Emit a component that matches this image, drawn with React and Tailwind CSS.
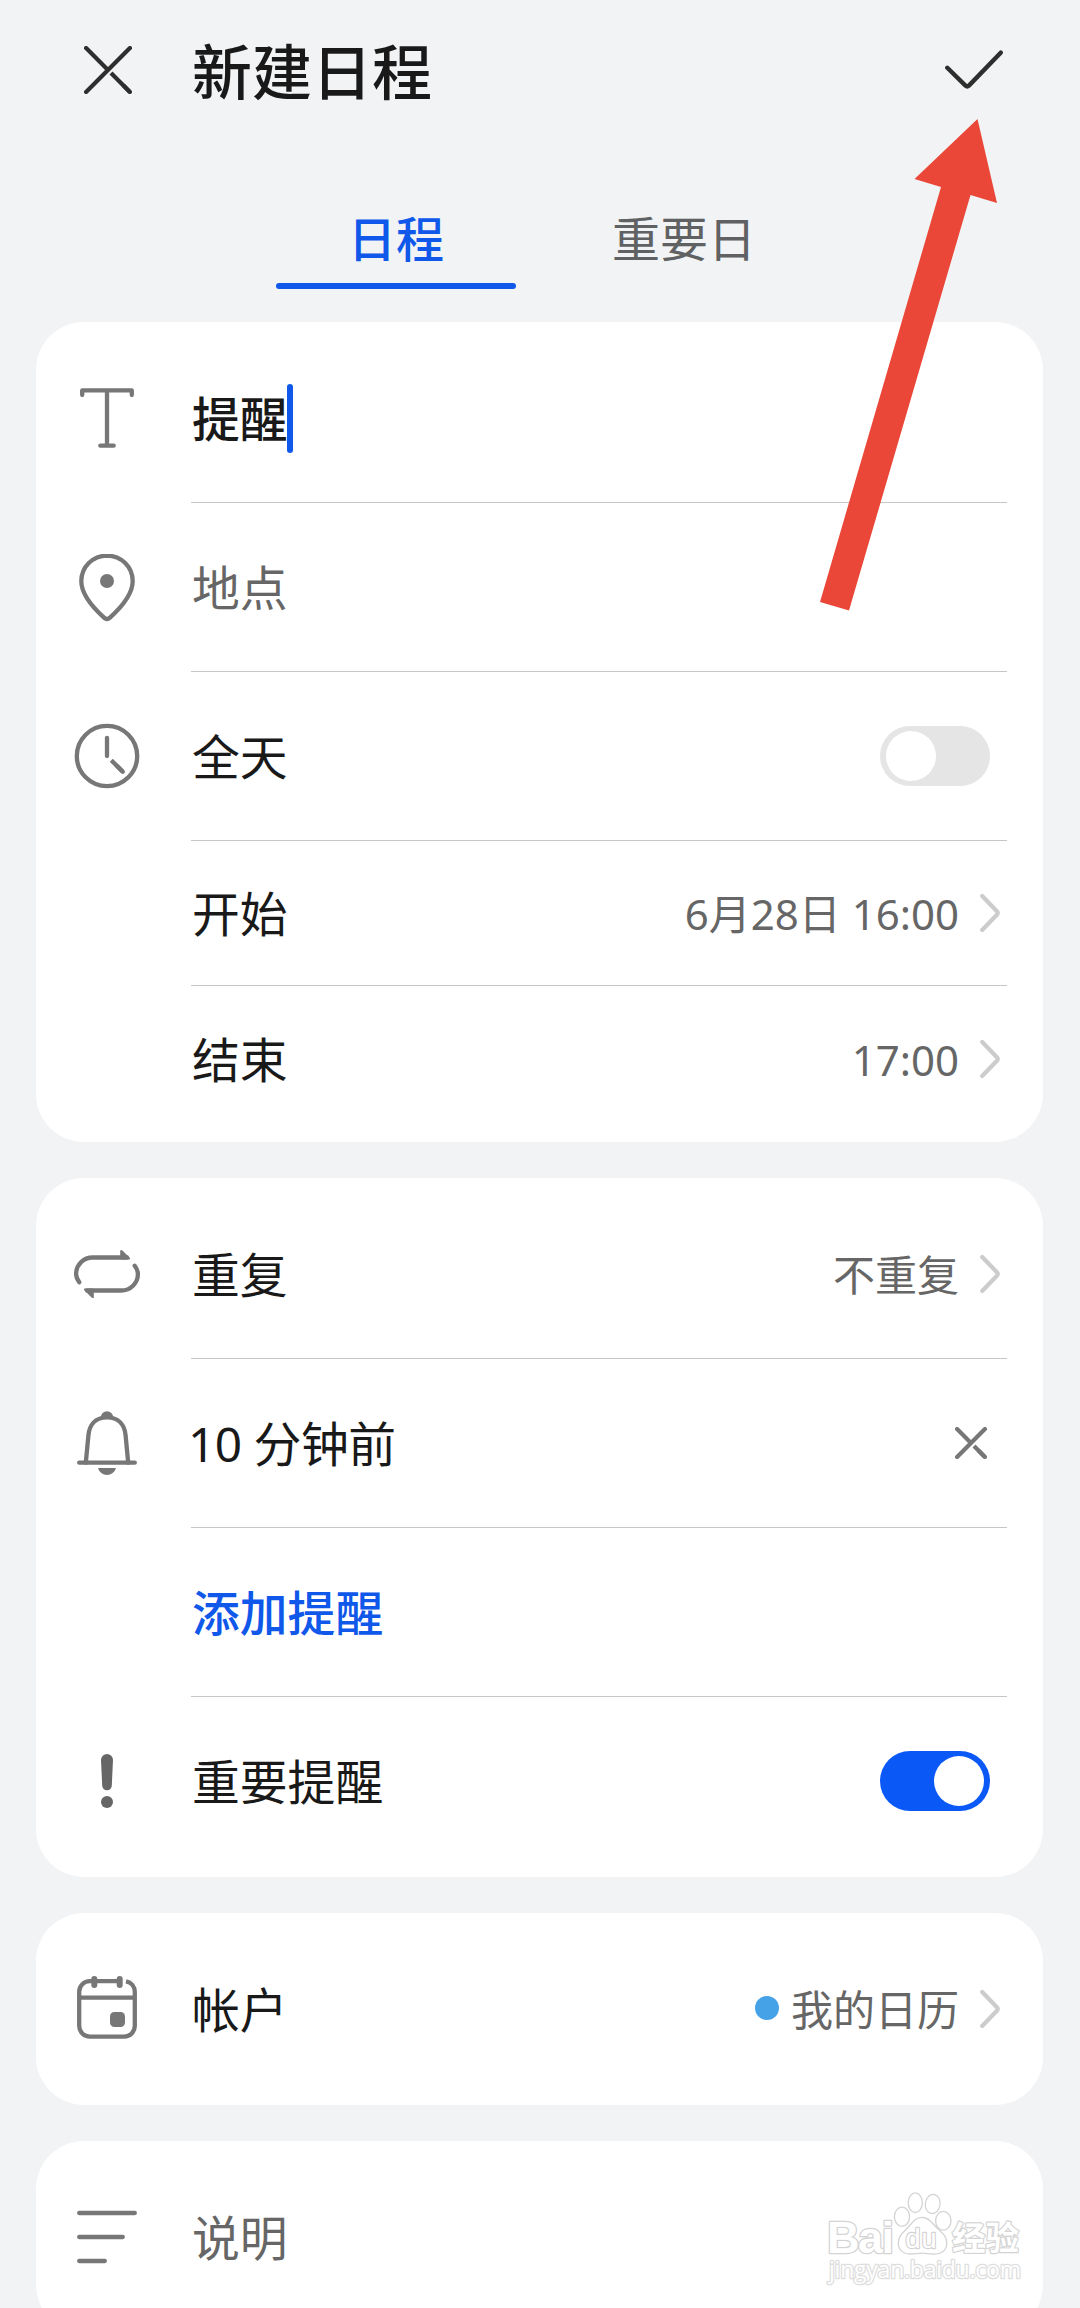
import React from "react";

const iconProps = {
  width: 72,
  height: 72,
  viewBox: "0 0 72 72",
  fill: "none",
  stroke: "#777777",
  strokeWidth: 4.3,
  strokeLinecap: "round",
  strokeLinejoin: "round",
};

const TitleIcon = () => (
  <svg {...iconProps}>
    <path d="M11.2 13V8.4H60.8V13M36 8.4V63.7M29.3 63.7H42.7" />
  </svg>
);

const PinIcon = () => (
  <svg {...iconProps}>
    <path d="M36 4.6C21.7 4.6 10.3 16 10.3 30.2C10.3 43 22.5 57 33 66.6Q36 69.4 39 66.6C49.5 57 61.7 43 61.7 30.2C61.7 16 50.3 4.6 36 4.6Z" />
    <circle cx="36" cy="30" r="7" fill="#777777" stroke="none" />
  </svg>
);

const ClockIcon = () => (
  <svg {...iconProps}>
    <circle cx="36" cy="36" r="30.2" />
    <path d="M36 17.8V36" />
    <path d="M51.8 51.8L40.3 40.3" strokeLinecap="butt" />
    <path d="M51.8 51.8L46 46" />
  </svg>
);

const RepeatArm = () => (
  <>
    <path d="M8.3 44.2C6.3 41.5 5.1 39.2 5.1 36C5.1 26.8 12.5 19.5 21.8 19.5H56" />
    <path d="M49.2 19V12.6Q50 11.4 51.4 12.6L59.2 20.2Q59.4 21.6 58 21.6H50Z" fill="#777777" stroke="none" />
  </>
);

const RepeatIcon = () => (
  <svg {...iconProps}>
    <RepeatArm />
    <g transform="rotate(180 36 36)">
      <RepeatArm />
    </g>
  </svg>
);

const BellIcon = () => (
  <svg {...iconProps}>
    <path d="M8.2 55.7H63.8" />
    <path d="M14.8 55.7L17.4 28.5C18.4 17.5 25 10.4 36 10.4C47 10.4 53.6 17.5 54.6 28.5L57.2 55.7" />
    <path d="M29.8 10.5A6.2 6.2 0 0 1 42.2 10.5Z" fill="#777777" stroke="none" />
    <path d="M27 61H45A9.3 9.3 0 0 1 27 61Z" fill="#777777" stroke="none" />
  </svg>
);

const AlertIcon = () => (
  <svg {...iconProps} stroke="none" fill="#666666">
    <path d="M30 15A6 6 0 0 1 42 15L40.8 40.500A4.800 4.800 0 0 1 31.200 40.500Z" />
    <circle cx="36" cy="57" r="6" />
  </svg>
);

const CalendarIcon = () => (
  <svg {...iconProps}>
    <path d="M55 8.4C60.5 9.5 63.8 13.6 63.8 19V53A10.6 10.6 0 0 1 53.2 63.6H18.8A10.6 10.6 0 0 1 8.2 53V18.6A10.6 10.6 0 0 1 18.8 8.1H50" strokeLinecap="butt" />
    <path d="M8.2 24.7H63.8" strokeLinecap="butt" />
    <path d="M23.3 6V12M48.7 6V12" strokeWidth="6" />
    <rect x="39" y="39" width="15" height="15" rx="4.5" fill="#777777" stroke="none" />
  </svg>
);

const NotesIcon = () => (
  <svg {...iconProps}>
    <path d="M8.2 12H63.8M8.2 36H51.8M8.2 60H33.8" />
  </svg>
);

const Chevron = () => (
  <svg className="ml-[21px] mr-[7px] shrink-0" width="20" height="40" viewBox="0 0 20 40" fill="none" stroke="#cccccc" strokeWidth="4.2" strokeLinecap="round" strokeLinejoin="round">
    <path d="M2.2 3L16.9 18.2Q18.6 20 16.9 21.8L2.2 37" />
  </svg>
);

const Cross = ({ size, color, className }) => (
  <svg className={className} width={size} height={size} viewBox={`0 0 ${size} ${size}`} fill="none" stroke={color} strokeWidth="4.2" strokeLinecap="round">
    <path d={`M${size - 2.1} 2.1L2.1 ${size - 2.1}M2.1 2.1L${size / 2} ${size / 2}`} />
    <path d={`M${size - 2.1} ${size - 2.1}L${size - 8} ${size - 8}`} />
    <path d={`M${size - 2.1} ${size - 2.1}L${size / 2 + 3} ${size / 2 + 3}`} strokeLinecap="butt" />
  </svg>
);

const Toggle = ({ on }) => (
  <div
    className={
      on
        ? "mr-[17px] flex h-[60px] w-[110px] items-center justify-end rounded-full bg-[#0a59f7] px-1.5"
        : "mr-[17px] flex h-[60px] w-[110px] items-center rounded-full bg-[#e5e5e5] px-1.5"
    }
  >
    <div className="size-[50px] rounded-full bg-white" />
  </div>
);

const Card = ({ children }) => (
  <section className="rounded-[48px] bg-white py-3 pl-[35px] pr-9">{children}</section>
);

const Value = ({ children }) => <span className="pt-0.5">{children}</span>;

const Row = ({ icon, label, tone = "text-[#191919]", short, last, caret, children }) => (
  <div className={short ? "flex h-[145px]" : last ? "flex h-[168px]" : "flex h-[169px]"}>
    <div className="flex w-[120px] shrink-0 items-center pb-px">{icon}</div>
    <div className={last ? "flex flex-1 items-center" : "flex flex-1 items-center border-b border-[#c6c6c6]"}>
      <span className={`pt-0.5 pl-px text-[47.8px] leading-[60px] ${tone}`}>{label}</span>
      {caret && <span className="-ml-px h-[69px] w-1.5 rounded-full bg-[#0f58ea]" />}
      <div className="ml-auto flex items-center text-[42px] leading-[60px] text-[#666666]">{children}</div>
    </div>
  </div>
);

const Watermark = () => (
  <svg className="absolute left-[820px] top-[2185px]" width="210" height="105" viewBox="0 0 210 105" fill="#ffffff" stroke="#d4d4d4" strokeWidth="1.3" strokeLinejoin="round">
    <text x="7" y="67.7" fontFamily="Liberation Sans" fontWeight="700" fontSize="45" textLength="67" strokeWidth="2.6" paintOrder="stroke">Bai</text>
    <ellipse cx="82" cy="31.7" rx="7.6" ry="9.6" />
    <ellipse cx="95.3" cy="17.7" rx="7.1" ry="9.8" />
    <ellipse cx="112.7" cy="19" rx="7.4" ry="9.6" transform="rotate(8 112.7 19)" />
    <ellipse cx="123.3" cy="35.7" rx="7.7" ry="9.4" />
    <path d="M102 32.3C109 32.3 112 38 116 42C121 47 126.7 50 126.7 58C126.7 66 121 69.5 113 69C108 68.7 106 68.2 102 68.2C98 68.2 95 69 90 69C83 69 78.3 65 78.3 58C78.3 50 84 47 88.5 42C92 38 95 32.3 102 32.3Z" />
    <text x="85.5" y="63.3" fontFamily="Liberation Sans" fontSize="27" textLength="31" strokeWidth="2.4" paintOrder="stroke">du</text>
    <text x="132" y="65" fontFamily="Noto Sans CJK SC" fontWeight="700" fontSize="33.5" strokeWidth="2.4" paintOrder="stroke">经验</text>
    <text x="9" y="93.3" fontFamily="Open Sans" fontSize="23" textLength="192" stroke="#dedede" strokeWidth="2.6" paintOrder="stroke">jingyan.baidu.com</text>
  </svg>
);

export default function App() {
  return (
    <div className="relative h-[2308px] w-[1080px] overflow-hidden bg-[#f1f3f5] font-['Noto_Sans','Noto_Sans_CJK_SC',sans-serif]">
      <header className="flex h-[140px] items-center pl-[84px] pr-[77px]">
        <Cross size={48} color="#2e2e2e" />
        <h1 className="ml-[60px] pt-1 text-[60px] font-medium leading-[80px] text-[#191919]">新建日程</h1>
        <svg className="ml-auto" width="58" height="40" viewBox="0 0 58 40" fill="none" stroke="#2e2e2e" strokeWidth="4.4" strokeLinecap="round" strokeLinejoin="round">
          <path d="M2.3 17.8L20.5 35.6Q22.2 37.1 23.9 35.6L55.7 2.7" />
        </svg>
      </header>

      <nav className="flex h-[182px] justify-center gap-12 text-[48px] leading-[60px]">
        <div className="flex h-[149px] w-60 flex-col items-center justify-end text-[#0f58ea]">
          <span className="font-medium">日程</span>
          <span className="mt-3.5 h-1.5 w-full rounded-full bg-[#0f58ea]" />
        </div>
        <div className="flex h-[149px] w-60 flex-col items-center justify-end pb-5 text-[#606163]">
          <span>重要日</span>
        </div>
      </nav>

      <main className="ml-9 flex w-[1007px] flex-col gap-9">
        <Card>
          <Row icon={<TitleIcon />} label="提醒" tone="font-medium text-[#191919]" caret />
          <Row icon={<PinIcon />} label="地点" tone="text-[#666666]" />
          <Row icon={<ClockIcon />} label="全天">
            <Toggle />
          </Row>
          <Row label="开始" short>
            <Value>6月28日 16:00</Value>
            <Chevron />
          </Row>
          <div className="-mb-px">
            <Row label="结束" short last>
              <Value>17:00</Value>
              <Chevron />
            </Row>
          </div>
        </Card>

        <Card>
          <Row icon={<RepeatIcon />} label="重复">
            <Value>不重复</Value>
            <Chevron />
          </Row>
          <Row icon={<BellIcon />} label="10 分钟前" tone="-ml-1 tracking-[-0.5px] text-[#191919]">
            <Cross size={32} color="#777777" className="mr-5" />
          </Row>
          <Row label="添加提醒" tone="font-medium text-[#0f58ea]" />
          <Row icon={<AlertIcon />} label="重要提醒" last>
            <Toggle on />
          </Row>
        </Card>

        <Card>
          <Row icon={<CalendarIcon />} label="帐户" last>
            <span className="mb-0.5 mr-3 size-6 rounded-full bg-[#46a2e6]" />
            <Value>我的日历</Value>
            <Chevron />
          </Row>
        </Card>

        <Card>
          <Row icon={<NotesIcon />} label="说明" tone="text-[#666666]" last />
        </Card>
      </main>

      <svg className="absolute left-[810px] top-[110px]" width="200" height="510" viewBox="810 110 200 510">
        <path d="M977.5 119L997 203L970.5 195L849 610.5L820 602L941 187L914.5 179Z" fill="#ea4738" />
      </svg>
      <Watermark />
    </div>
  );
}
